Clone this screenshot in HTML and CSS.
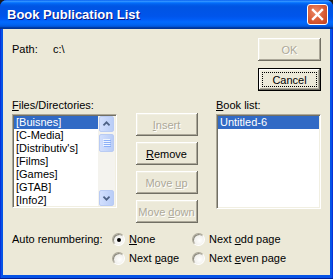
FILE: index.html
```html
<html>

<head>
    <link rel="stylesheet" href="styles.css">
</head>

<body>
    <div class="window">
        <div class="titlebar">
            <span class="title">Book Publication List</span>
            <span class="close">
                <svg width="19" height="19" viewBox="0 0 19 19">
                    <path d="M5 5 L14 14 M14 5 L5 14" stroke="#fff" stroke-width="2.4" stroke-linecap="square" />
                </svg>
            </span>
        </div>
        <div class="client">
            <div class="top">
                <div class="path">
                    <span class="path-label">Path:</span>
                    <span>c:\</span>
                </div>
                <div class="top-buttons">
                    <button class="btn" disabled>OK</button>
                    <button class="btn default">Cancel</button>
                </div>
            </div>

            <div class="lists">
                <div class="caption files-caption"><u>F</u>iles/Directories:</div>
                <div class="caption books-caption"><u>B</u>ook list:</div>

                <div class="listbox files">
                    <ul class="items">
                        <li class="selected">[Buisnes]</li>
                        <li>[C-Media]</li>
                        <li>[Distributiv's]</li>
                        <li>[Films]</li>
                        <li>[Games]</li>
                        <li>[GTAB]</li>
                        <li>[Info2]</li>
                    </ul>
                    <div class="scrollbar">
                        <div class="arrow">
                            <svg width="15" height="14" viewBox="0 0 15 14">
                                <path d="M4 8.5 L7.5 5 L11 8.5" fill="none" stroke="#4d6185" stroke-width="2" />
                            </svg>
                        </div>
                        <div class="thumb">
                            <svg width="8" height="8" viewBox="0 0 8 8">
                                <path d="M0 0.5 H7 M0 2.5 H7 M0 4.5 H7 M0 6.5 H7" stroke="#eef4fe" />
                                <path d="M1 1.5 H8 M1 3.5 H8 M1 5.5 H8 M1 7.5 H8" stroke="#8cb0f8" />
                            </svg>
                        </div>
                        <div class="track"></div>
                        <div class="arrow">
                            <svg width="15" height="14" viewBox="0 0 15 14">
                                <path d="M4 5.5 L7.5 9 L11 5.5" fill="none" stroke="#4d6185" stroke-width="2" />
                            </svg>
                        </div>
                    </div>
                </div>

                <div class="actions">
                    <button class="btn" disabled><u>I</u>nsert</button>
                    <button class="btn"><u>R</u>emove</button>
                    <button class="btn" disabled>Move <u>u</u>p</button>
                    <button class="btn" disabled>Move <u>d</u>own</button>
                </div>

                <div class="listbox books">
                    <ul class="items">
                        <li class="selected">Untitled-6</li>
                    </ul>
                </div>
            </div>

            <div class="renumber">
                <span class="renumber-label">Auto renumbering:</span>
                <div class="radios">
                    <label class="radio"><span class="dot checked"></span><span><u>N</u>one</span></label>
                    <label class="radio"><span class="dot"></span><span>Next <u>o</u>dd page</span></label>
                    <label class="radio"><span class="dot"></span><span>Next <u>p</u>age</span></label>
                    <label class="radio"><span class="dot"></span><span>Next <u>e</u>ven page</span></label>
                </div>
            </div>
        </div>
    </div>
</body>

</html>
```

FILE: styles.css
```css
html {
    background-color: #1b1b1b;
}

body {
    margin: 0;
    font-family: 'Liberation Sans', Arial, sans-serif;
    font-size: 11px;
    line-height: 13px;
    color: #000;
}

.window {
    width: 333px;
    height: 279px;
    display: flex;
    flex-direction: column;
    background: #0553e6;
    border-radius: 7px 7px 0 0;
    box-shadow: inset 0 -1px #001c94, inset -1px 0 #0831d9, inset 1px 0 #0831d9;
}

.titlebar {
    height: 29px;
    flex: none;
    display: flex;
    align-items: center;
    justify-content: space-between;
    padding: 0 5px 0 7px;
    border-radius: 7px 7px 0 0;
    background: linear-gradient(to bottom,
            #0058ee 0%, #3593ff 4%, #288eff 6%, #127dff 8%, #036ffc 10%,
            #0262ee 14%, #0057e5 20%, #0054e3 24%, #0055eb 56%, #005bf5 66%,
            #026afe 76%, #0062ef 86%, #0052d6 92%, #0040ab 94%, #003092 100%);
}

.title {
    color: #fff;
    font-weight: bold;
    font-size: 13px;
    text-shadow: 1px 1px #0a1883;
    padding-bottom: 1px;
}

.close {
    width: 19px;
    height: 19px;
    border: 1px solid #fff;
    border-radius: 3px;
    background: radial-gradient(circle at 40% 35%, #ec8a68, #d85a33 55%, #c23f1c);
    display: flex;
}

.client {
    flex: 1;
    margin: 0 3px 4px 3px;
    background: #ece9d8;
    padding: 9px 9px 0 9px;
}

/* path + ok/cancel */

.top {
    display: flex;
    justify-content: space-between;
}

.path {
    display: flex;
    height: 23px;
    align-items: center;
}

.path-label {
    width: 41px;
}

.top-buttons {
    display: flex;
    flex-direction: column;
    gap: 7px;
}

.btn {
    width: 63px;
    height: 23px;
    padding: 0;
    border: none;
    background: #ece9d8;
    font-family: inherit;
    font-size: 11px;
    color: #000;
    box-shadow: inset -1px -1px #716f64, inset 1px 1px #fff, inset -2px -2px #aca899, inset 2px 2px #f1efe2;
}

.btn:disabled {
    color: #aca899;
    text-shadow: 1px 1px #fff;
}

.btn.default {
    border: 1px solid #000;
    outline: 1px dotted #000;
    outline-offset: -5px;
}

/* lists */

.lists {
    display: grid;
    grid-template-columns: 105px 62px 105px;
    grid-template-rows: 15px auto;
    justify-content: space-between;
    margin-top: 8px;
}

.files-caption {
    grid-column: 1;
    grid-row: 1;
}

.books-caption {
    grid-column: 3;
    grid-row: 1;
}

.listbox {
    grid-row: 2;
    align-self: start;
    height: 90px;
    background: #fff;
    border: 1px solid;
    border-color: #aca899 #fff #fff #aca899;
    box-shadow: inset 1px 1px #716f64, inset -1px -1px #f1efe2;
    padding: 1px;
    display: flex;
}

.listbox.files {
    grid-column: 1;
}

.listbox.books {
    grid-column: 3;
    height: 91px;
}

.items {
    list-style: none;
    margin: 0;
    padding: 0;
    flex: 1;
    overflow: hidden;
}

.items li {
    height: 13px;
    padding-left: 2px;
    white-space: nowrap;
}

.items li.selected {
    background: #316ac5;
    color: #fff;
}

.scrollbar {
    width: 17px;
    display: flex;
    flex-direction: column;
    background: #f4f3ee;
}

.arrow,
.thumb {
    height: 14px;
    margin: 0 1px 1px 1px;
    border: 1px solid #b9cbf3;
    border-radius: 2px;
    background: linear-gradient(to right, #d2dffd, #b9cdf7);
    display: flex;
    align-items: center;
    justify-content: center;
}

.arrow:last-child {
    margin: 1px 1px 0 1px;
}

.thumb {
    height: 16px;
    margin-top: 1px;
}

.track {
    flex: 1;
}

.actions {
    grid-column: 2;
    grid-row: 2;
    margin-top: -1px;
    display: flex;
    flex-direction: column;
    gap: 6px;
}

.actions .btn {
    width: 62px;
}

/* radios */

.renumber {
    display: flex;
    margin-top: 7px;
}

.renumber-label {
    width: 100px;
    line-height: 19px;
}

.radios {
    display: grid;
    grid-template-columns: 80px auto;
    grid-auto-rows: 19px;
}

.radio {
    display: flex;
    align-items: center;
    gap: 4px;
}

.dot {
    width: 11px;
    height: 11px;
    border: 1px solid;
    border-color: #aca899 #fff #fff #aca899;
    border-radius: 50%;
    background: radial-gradient(circle at 60% 60%, #fff, #e6e4dc);
    box-shadow: inset 1px 1px #8c8a7e;
    display: flex;
    align-items: center;
    justify-content: center;
}

.dot.checked::after {
    content: "";
    width: 4px;
    height: 4px;
    border-radius: 50%;
    background: #000;
}
```
